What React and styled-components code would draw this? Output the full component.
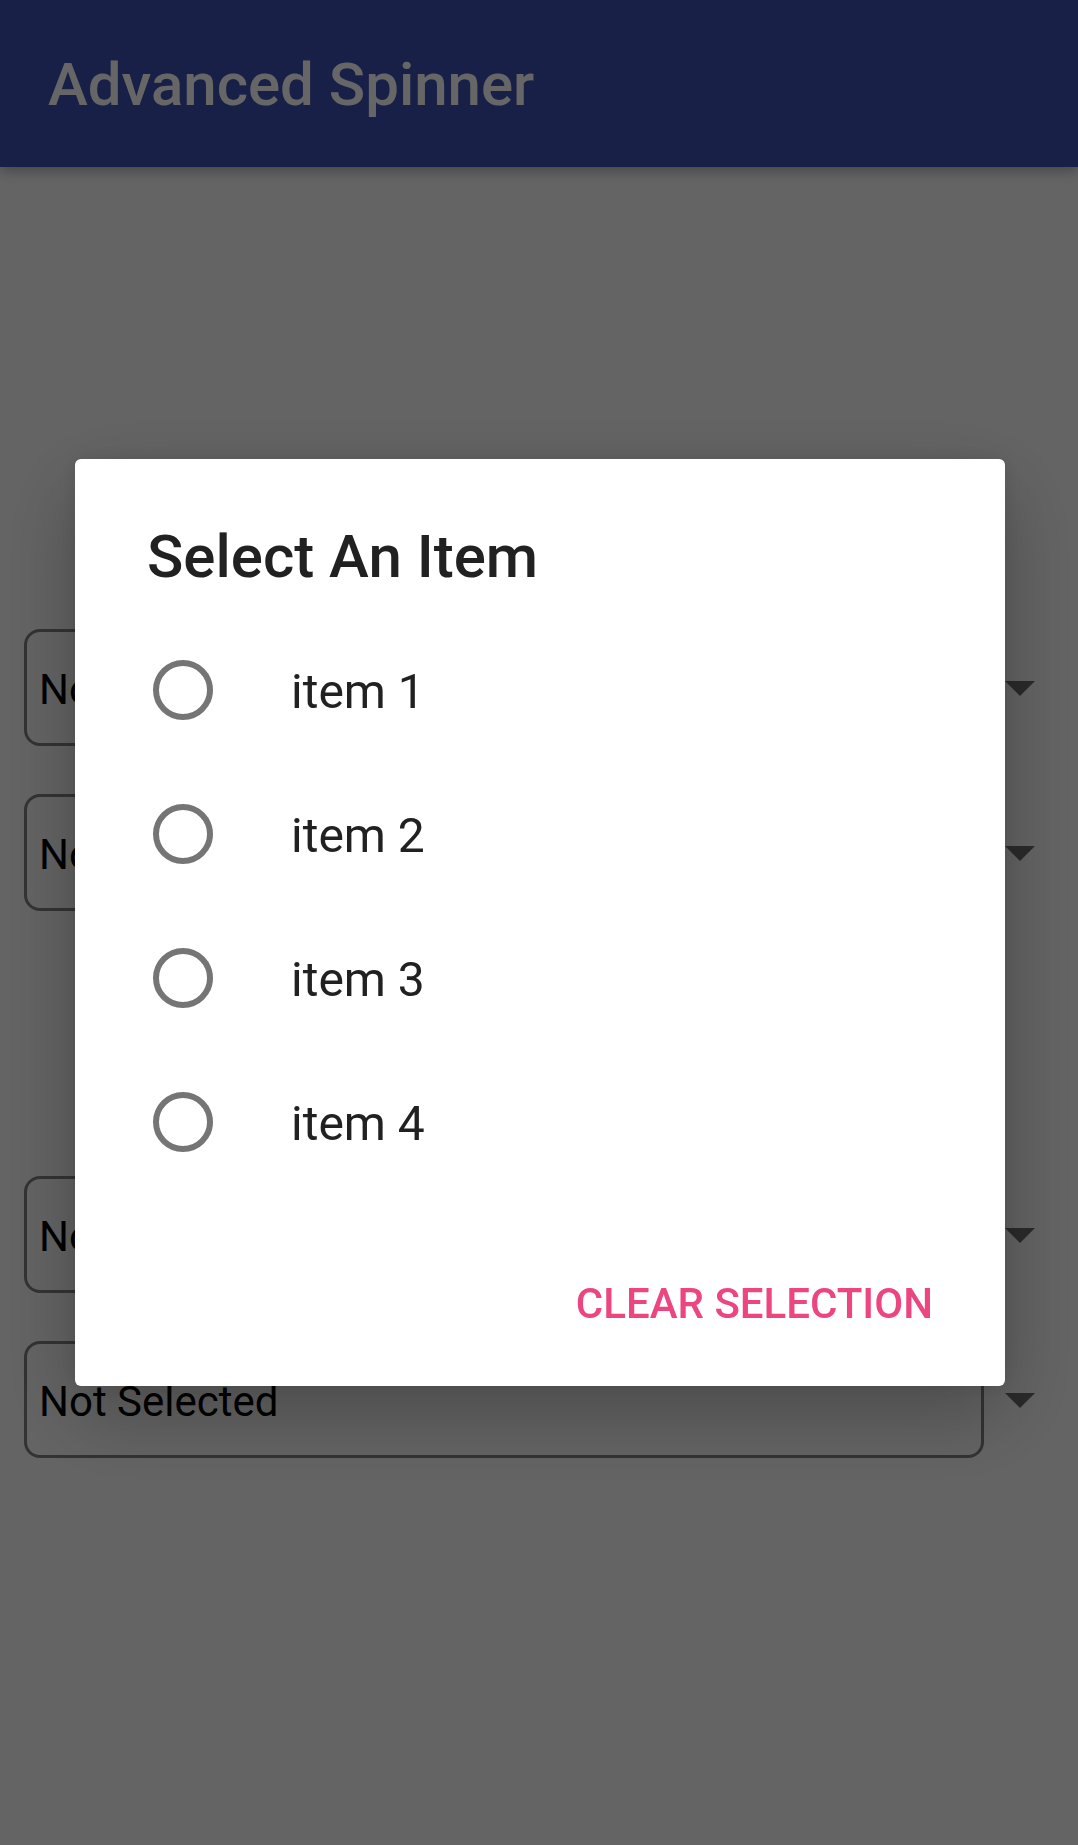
import React, { useState } from "react";
import styled, { createGlobalStyle } from "styled-components";

const GlobalStyle = createGlobalStyle`
  *, *::before, *::after {
    box-sizing: border-box;
  }

  body {
    margin: 0;
    background: #fafafa;
    color: #000;
    font-family: Roboto, "Noto Sans", sans-serif;
  }
`;

const Screen = styled.div`
  display: flex;
  flex-direction: column;
  min-height: 100vh;
`;

const AppBar = styled.header`
  display: flex;
  align-items: center;
  padding: 49px 48px 46px;
  background: #3f51b5;
  box-shadow: 0 4px 12px rgba(0, 0, 0, 0.3);
`;

const AppTitle = styled.h1`
  margin: 0;
  color: #fff;
  font-size: 60px;
  font-weight: 500;
  line-height: 72px;
`;

const Form = styled.main`
  display: flex;
  flex-direction: column;
  gap: 265px;
  padding: 462px 22px 48px 24px;
`;

const FieldGroup = styled.div`
  display: flex;
  flex-direction: column;
  gap: 48px;
`;

const Field = styled.div`
  display: flex;
  align-items: center;
`;

const FieldSelect = styled.select`
  flex: 1;
  min-width: 0;
  height: 117px;
  margin: 0;
  padding: 3px 12px 0;
  appearance: none;
  border: 3px solid #808080;
  border-radius: 16px;
  background: transparent;
  color: #000;
  font-family: inherit;
  font-size: 42px;
`;

const Arrow = styled.svg`
  flex: none;
  width: 72px;
  height: 72px;
  margin-bottom: 1px;
  fill: #6a6a6a;
`;

const Scrim = styled.div`
  position: fixed;
  inset: 0;
  display: flex;
  align-items: center;
  justify-content: center;
  padding: 48px 73px 48px 75px;
  background: rgba(0, 0, 0, 0.6);
`;

const Dialog = styled.section`
  display: flex;
  flex-direction: column;
  flex: 1;
  padding: 60px 0 29px;
  border-radius: 6px;
  background: #fff;
  box-shadow: 0 28px 80px rgba(0, 0, 0, 0.26), 0 0 20px rgba(0, 0, 0, 0.1);
`;

const DialogTitle = styled.h2`
  margin: 0 72px 24px;
  color: #212121;
  font-size: 60px;
  font-weight: 500;
  line-height: 75px;
`;

const Options = styled.div`
  display: flex;
  flex-direction: column;
`;

const Option = styled.label`
  display: flex;
  align-items: center;
  gap: 78px;
  height: 144px;
  padding: 0 78px;
  color: #212121;
  font-size: 48px;
  line-height: 60px;
`;

const OptionText = styled.span`
  padding-top: 3px;
`;

const Radio = styled.input`
  flex: none;
  width: 60px;
  height: 60px;
  margin: 0;
  appearance: none;
  border: 6px solid #757575;
  border-radius: 50%;

  &:checked {
    border-color: #ff4081;
    background: radial-gradient(#ff4081 14px, transparent 15px);
  }
`;

const Actions = styled.footer`
  display: flex;
  justify-content: flex-end;
  margin-top: 55px;
  padding: 0 48px;
`;

const TextButton = styled.button`
  height: 108px;
  padding: 0 24px;
  border: 0;
  background: transparent;
  color: #ec4580;
  font-family: inherit;
  font-size: 42px;
  font-weight: 500;
  text-transform: uppercase;
`;

const items = ["item 1", "item 2", "item 3", "item 4"];
const groups = [
  ["first", "second"],
  ["third", "fourth"],
];

function SpinnerField({ name }) {
  return (
    <Field>
      <FieldSelect name={name} aria-label={`${name} spinner`} defaultValue="">
        <option value="">Not Selected</option>
        {items.map((item) => (
          <option key={item}>{item}</option>
        ))}
      </FieldSelect>
      <Arrow viewBox="0 0 24 24" aria-hidden="true">
        <path d="M7 10l5 5 5-5z" />
      </Arrow>
    </Field>
  );
}

export default function App() {
  const [selected, setSelected] = useState(null);

  return (
    <>
      <GlobalStyle />
      <Screen>
        <AppBar>
          <AppTitle>Advanced Spinner</AppTitle>
        </AppBar>
        <Form>
          {groups.map((group) => (
            <FieldGroup key={group[0]}>
              {group.map((name) => (
                <SpinnerField key={name} name={name} />
              ))}
            </FieldGroup>
          ))}
        </Form>
      </Screen>
      <Scrim>
        <Dialog role="dialog" aria-modal="true" aria-labelledby="dialog-title">
          <DialogTitle id="dialog-title">Select An Item</DialogTitle>
          <Options role="radiogroup" aria-labelledby="dialog-title">
            {items.map((item) => (
              <Option key={item}>
                <Radio
                  type="radio"
                  name="item"
                  checked={selected === item}
                  onChange={() => setSelected(item)}
                />
                <OptionText>{item}</OptionText>
              </Option>
            ))}
          </Options>
          <Actions>
            <TextButton type="button" onClick={() => setSelected(null)}>
              Clear Selection
            </TextButton>
          </Actions>
        </Dialog>
      </Scrim>
    </>
  );
}
